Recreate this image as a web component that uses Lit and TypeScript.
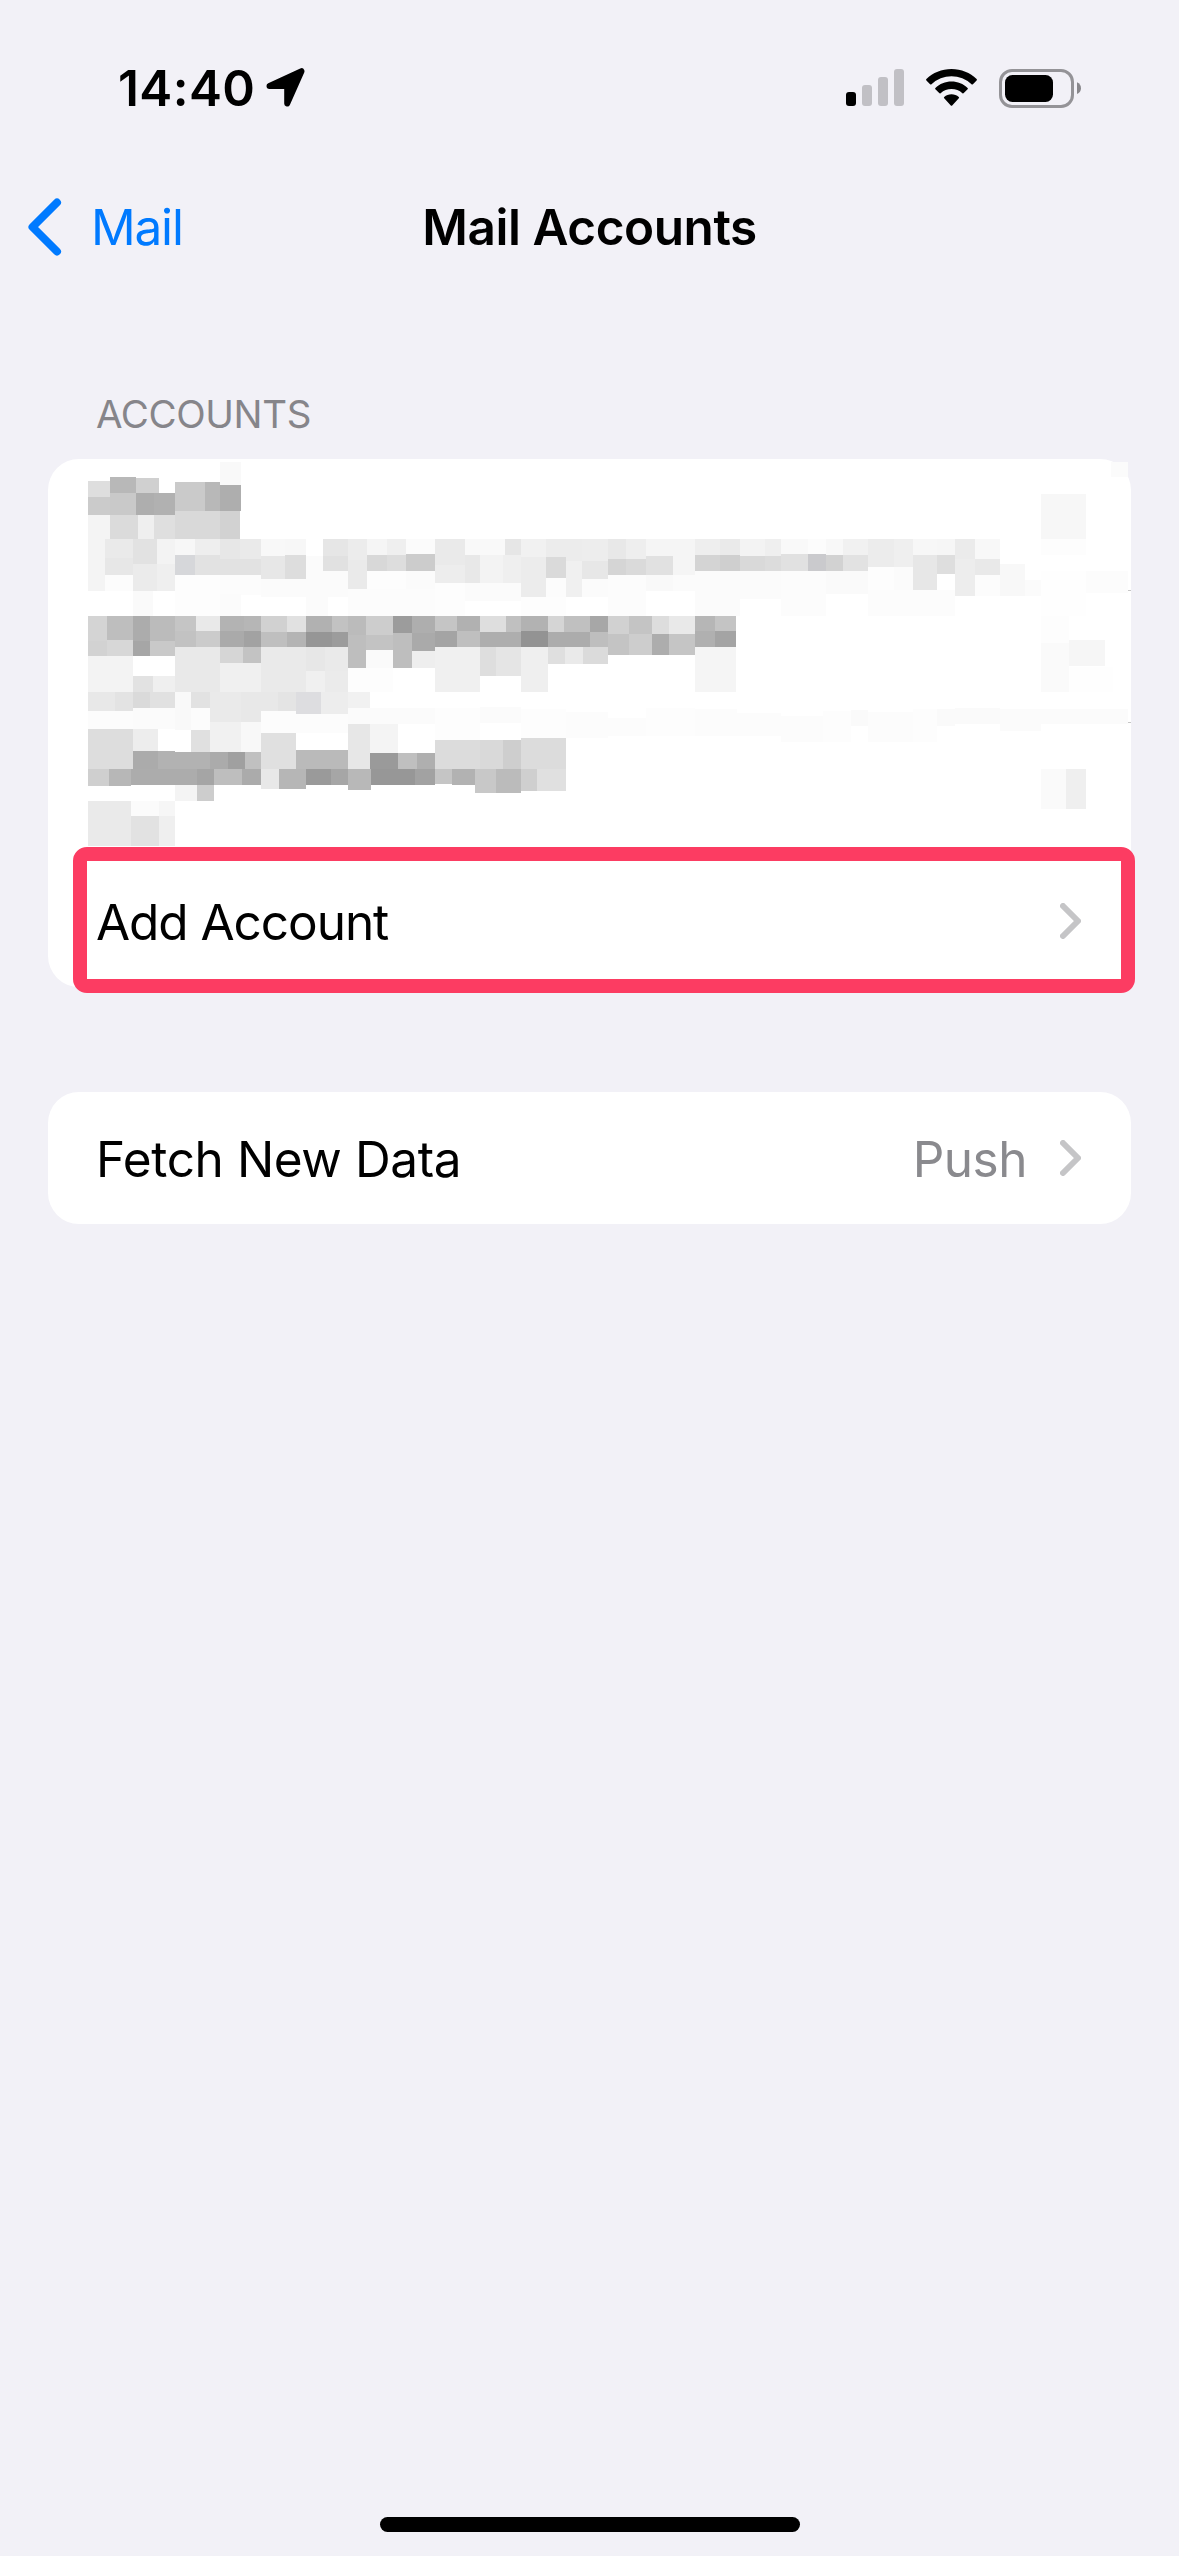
import { LitElement, html, svg, css } from "lit";
import { customElement, property } from "lit/decorators.js";

const sheet = css`
  :host {
    display: block;
    font-family: Inter, "Liberation Sans", sans-serif;
    font-size: 49.5px;
    line-height: 60px;
    color: #000;
  }
  svg {
    display: block;
    flex: none;
  }
`;

// Redaction mosaic over the account rows: x1 y1 x2 y2 shade.
// A two-digit shade is a grey, a six-digit one a full colour.
const MOSAIC = `
88 481 110 497 de|110 477 136 493 b8|136 478 159 493 d0|88 497 110 515 cb|110 493 136 515 c9
136 493 154 515 ae|154 493 175 515 b1|175 482 205 511 ca|205 482 220 511 b8|220 462 241 485 f9
220 485 241 511 ae|88 515 110 539 f4|110 515 138 539 db|138 515 154 539 ef|154 515 175 539 df
175 511 220 539 d9|220 511 240 539 d2|88 539 105 591 f4|105 539 133 558 ea|105 558 133 575 e7
105 575 133 591 fc|133 539 157 564 e2|133 564 157 591 eb|157 539 175 564 f3|157 564 175 591 ef
175 539 195 555 f7|175 555 195 575 d6d7da|195 539 220 555 ee|195 555 220 575 e2|220 539 240 559 e7
240 539 261 559 ea|220 559 261 575 e2|261 539 285 556 f8|285 539 306 556 f7|261 556 285 579 e7
285 555 306 579 dd|175 575 220 616 fd|220 575 261 595 fc|261 579 306 597 fb|306 556 323 597 fb
323 571 348 597 fb|323 539 348 556 e6|323 556 348 571 e1|348 539 367 560 ec|348 560 367 589 ea
367 539 387 555 f5|387 539 406 555 ef|367 555 387 571 d8|387 555 406 571 dd|367 571 406 589 fd
406 571 435 589 fb|133 591 153 616 fa|220 594 241 616 fb|306 597 328 616 fb|348 589 435 616 fc
406 539 435 554 fb|406 554 435 571 cc|435 539 465 565 ea|435 565 465 583 ed|465 539 505 555 f9
505 539 521 555 e6|465 555 480 583 e8|480 555 503 583 f3|503 555 521 583 ef|521 539 546 557 f1
521 557 546 597 ec|546 539 566 557 ec|546 557 566 578 da|546 578 566 597 fc|566 539 582 561 ec
582 539 608 561 ed|566 561 582 597 f0|582 561 608 579 e7|582 579 608 597 fb|608 539 626 559 e8
626 539 646 559 ee|608 559 626 575 d5|626 559 646 575 da|646 539 695 575 f5|646 556 673 575 e1
608 575 646 616 fc|646 575 673 591 f9|673 575 695 591 fb|695 539 720 555 ee|720 539 740 555 ea
695 555 720 571 d4|720 555 740 571 cf|740 539 765 556 f3|765 539 781 556 ef|740 556 765 571 d9
765 556 781 571 dc|695 571 740 616 fb|740 571 781 599 fb|435 583 465 616 fd|465 583 521 601 fb
521 597 566 616 fd|781 539 808 554 f9|808 539 826 554 fc|826 539 843 555 f8|843 539 868 555 f1
868 539 894 567 ec|894 539 913 567 ef|781 554 808 571 e1|808 554 826 571 cacacd|826 555 843 571 d2
843 555 868 571 e2|913 539 937 555 f7|937 539 955 555 f6|955 539 975 559 eb|975 539 1000 559 f8
913 555 937 590 e7|937 555 955 574 de|955 559 975 596 ed|975 559 1000 575 e9|975 575 1000 596 fc
1000 564 1025 596 f8|1025 580 1041 596 fb|868 567 894 590 fd|894 567 913 590 fb|826 571 868 594 fa
781 571 826 616 fc|868 590 955 616 fc|1111 462 1128 477 fb|1041 494 1086 539 f7|1041 539 1086 555 fd
1041 571 1086 616 fe|1086 571 1128 593 fc|1128 590 1131 591 c6|1128 722 1131 723 c6
1041 616 1069 643 fd|1041 643 1069 692 fa|1069 640 1105 666 f6|1069 667 1113 692 fe
1041 769 1066 809 fa|1066 769 1086 809 ef|1041 709 1128 724 fb|1000 709 1041 731 fb
955 708 1000 724 fa|937 709 955 726 fa|913 709 937 742 fd|868 712 913 742 fc|851 710 868 726 fa
823 711 851 742 fd|781 716 823 742 fc|88 616 107 641 d4|107 616 133 640 be|88 641 107 656 d2
107 640 133 656 d7|133 616 150 641 ac|150 616 175 641 bb|133 641 150 656 a6|150 641 175 656 c9
175 616 196 631 c5|196 616 220 631 e9|175 631 196 647 c2|196 631 220 647 cb|220 616 244 631 b3
244 616 261 631 b6|220 631 244 647 aa|244 631 261 647 a2|261 616 287 632 d1|287 616 306 632 e1
261 632 287 647 bf|287 632 306 647 b4|306 616 332 632 b1|332 616 348 632 c2|306 632 332 647 96
332 632 348 647 9c|348 616 366 635 bb|366 616 393 635 cd|348 635 366 668 be|366 635 393 650 c3
366 650 393 668 fa|393 616 412 633 9c|412 616 435 633 ae|393 633 412 668 be|412 633 435 651 aa
412 651 435 668 ee|88 656 133 692 f3|133 676 153 692 e2|153 676 175 692 ef|175 647 220 692 e9
220 647 243 663 d6|243 647 261 663 c3|220 663 261 692 f0|261 647 306 692 ea|306 647 325 671 e7
325 647 348 671 ea|306 671 325 692 f0|325 671 348 692 eb|348 668 393 692 fd|88 692 115 711 e8
115 692 133 711 e3|133 692 150 708 da|150 692 175 708 e1|175 692 191 730 f9|191 692 210 708 e2
191 708 210 730 fc|210 692 241 722 ea|241 692 261 722 e8|261 692 278 711 e8|278 692 296 711 e4
296 692 321 714 dddde0|321 692 348 714 ed|348 692 370 708 f1|348 708 435 724 fb|88 711 133 729 fc
133 708 175 729 fb|261 711 296 733 fc|296 714 348 733 fc|88 729 133 769 dd|133 729 158 751 ed
191 730 210 752 e0|210 722 241 752 f1|241 722 261 752 f8|261 733 296 769 e0|133 751 158 769 ab
158 751 175 769 b2|175 752 210 769 b2|210 752 228 769 ab|228 752 245 769 a0|245 752 261 769 c0
296 750 348 769 ba|348 724 370 769 e7|370 724 398 753 f4|370 753 398 769 9a|398 753 417 769 bf
417 753 435 769 af|88 769 109 786 cf|109 769 131 786 b7|131 769 197 785 ac|197 769 214 785 a5
214 769 242 785 be|242 769 261 785 ab|261 769 279 789 e8|279 769 306 789 b6|306 769 331 785 9a
331 769 348 785 a6|348 769 371 790 b8|371 769 415 785 97|415 769 435 785 a2|175 785 197 801 f4
197 785 214 801 cd|88 801 131 846 ea|131 801 159 816 fb|159 801 175 816 f6|131 816 159 846 e2
159 816 175 846 ef|435 616 457 631 c5|457 616 480 631 b1|435 631 457 647 a4|457 631 480 647 bf
480 616 506 632 de|506 616 521 632 c0|480 632 521 647 ae|521 616 548 631 b2|521 631 548 647 93
548 616 564 632 d5|564 616 590 632 c0|590 616 608 632 a7|548 632 590 647 ac|590 632 608 647 be
608 616 629 634 d1|629 616 652 634 c4|652 616 669 634 dd|669 616 695 634 e9|608 634 629 655 c4
629 634 652 655 cd|652 634 669 655 ad|669 634 695 655 c5|695 616 715 631 b6|715 616 736 631 c4
695 631 715 647 b0|715 631 736 647 a4|435 647 480 692 f0|480 647 496 676 de|496 647 521 676 e5
521 647 548 692 ef|548 647 565 664 df|565 647 583 664 ea|583 647 608 664 db|695 647 736 692 f5
435 708 480 740 fd|480 707 521 723 fb|521 709 566 738 fd|566 712 608 738 fc|608 718 646 736 fc
646 708 695 736 fd|695 709 737 736 fc|737 713 781 736 fc|435 740 480 769 dc|480 740 503 769 d9
503 740 521 769 ce|521 738 566 769 dc|435 769 452 784 c5|452 769 475 785 b2|475 769 496 793 c8
496 769 521 793 bb|521 769 537 791 cf|537 769 566 791 e0`
  .trim()
  .split(/[|\n]/)
  .map((block) => {
    const [x1, y1, x2, y2, shade] = block.split(" ");
    return {
      x: +x1,
      y: +y1,
      w: +x2 - +x1,
      h: +y2 - +y1,
      fill: "#" + (shade.length === 2 ? shade.repeat(3) : shade),
    };
  });

@customElement("status-bar")
class StatusBar extends LitElement {
  static styles = [
    sheet,
    css`
      .bar {
        display: flex;
        align-items: center;
        height: 176px;
        padding: 0 98px 0 118px;
        box-sizing: border-box;
      }
      .time {
        font-weight: 600;
        letter-spacing: 0.4px;
        margin-right: 10.5px;
      }
      .gap {
        flex: 1;
      }
      .signal {
        margin-right: 22px;
      }
      .wifi {
        margin-right: 22px;
      }
    `,
  ];
  render() {
    return html`<div class="bar">
      <span class="time">14:40</span>
      <svg width="40" height="40" viewBox="0 0 40 40">
        <path
          d="M3.500 18 35.500 3.200 21.200 35.500V18Z"
          stroke="#000"
          stroke-width="6"
          stroke-linejoin="round"
        />
      </svg>
      <span class="gap"></span>
      <svg class="signal" width="58" height="38" viewBox="0 0 58 38">
        <rect y="23" width="10" height="14" rx="3" />
        <g fill="#c1c0c5">
          <rect x="16" y="16" width="10" height="21" rx="3" />
          <rect x="32" y="8" width="10" height="29" rx="3" />
          <rect x="48" width="10" height="37" rx="3" />
        </g>
      </svg>
      <svg class="wifi" width="51" height="38" viewBox="0 0 51 38">
        <path
          d="M25.500 0C35.300 0 44.200 3.800 50.600 10Q51.200 10.700 50.600 11.400L46.900 15.200Q46.200 15.900 45.500 15.200A29 29 0 0 0 5.500 15.200Q4.800 15.900 4.100 15.200L.4 11.400Q-.2 10.700 .4 10C6.800 3.800 15.700 0 25.500 0Z"
        />
        <path
          d="M25.500 12.600C31.700 12.600 37.300 15 41.600 18.900Q42.300 19.600 41.600 20.300L37.800 24.100Q37.100 24.800 36.400 24.200A16.500 16.500 0 0 0 14.600 24.200Q13.900 24.800 13.200 24.100L9.400 20.300Q8.700 19.600 9.400 18.900C13.700 15 19.300 12.600 25.500 12.600Z"
        />
        <path
          d="M25.500 25.200C28.300 25.200 30.800 26.200 32.800 27.900Q33.500 28.600 32.800 29.300L26.200 36.400Q25.500 37.100 24.800 36.400L18.200 29.300Q17.500 28.600 18.200 27.900C20.200 26.200 22.700 25.200 25.500 25.200Z"
        />
      </svg>
      <svg width="82" height="39" viewBox="0 0 82 39">
        <rect x="1.500" y="1.500" width="72" height="36" rx="11.500" fill="none" stroke="#949397" stroke-width="3" />
        <rect x="6" y="6" width="48" height="27" rx="7.500" />
        <path d="M78 13.300C80.600 14.400 82 16.700 82 19.200S80.600 24 78 25.100Z" fill="#88878b" />
      </svg>
    </div>`;
  }
}

@customElement("nav-bar")
class NavBar extends LitElement {
  static styles = [
    sheet,
    css`
      .bar {
        display: grid;
        grid-template-columns: 1fr auto 1fr;
        align-items: center;
        height: 102px;
        padding: 0 28px;
      }
      .back {
        display: flex;
        align-items: center;
        gap: 29px;
        color: #007aff;
      }
      .label {
        letter-spacing: -1.2px;
      }
      .title {
        font-weight: 600;
        letter-spacing: -0.45px;
      }
    `,
  ];
  render() {
    return html`<div class="bar">
      <span class="back">
        <svg width="34" height="58" viewBox="0 0 34 58">
          <path
            d="M29 4.500 4.500 29 29 53.500"
            fill="none"
            stroke="#007aff"
            stroke-width="8"
            stroke-linecap="round"
            stroke-linejoin="round"
          />
        </svg>
        <span class="label">Mail</span>
      </span>
      <span class="title">Mail Accounts</span>
    </div>`;
  }
}

@customElement("list-row")
class ListRow extends LitElement {
  @property() label = "";
  @property() value = "";
  @property({ type: Boolean, reflect: true }) highlighted = false;
  static styles = [
    sheet,
    css`
      .row {
        position: relative;
        display: flex;
        align-items: center;
        height: 132px;
        padding: 0 50px 0 48px;
      }
      .label {
        flex: 1;
        padding-top: 2px;
        letter-spacing: -0.4px;
      }
      :host([highlighted]) .label {
        letter-spacing: -1.05px;
      }
      .value {
        color: #8a8a8e;
        padding-top: 2px;
        letter-spacing: -0.5px;
        margin-right: 33px;
      }
      .ring {
        position: absolute;
        left: 25px;
        right: -4px;
        top: -8px;
        bottom: -6px;
        border: 14px solid #fc3c62;
        border-radius: 14px;
      }
    `,
  ];
  render() {
    return html`<div class="row">
      <span class="label">${this.label}</span>
      <span class="value">${this.value}</span>
      <svg width="21" height="36" viewBox="0 0 21 36">
        <path
          d="M3 3 18 18 3 33"
          fill="none"
          stroke="#c5c5c7"
          stroke-width="6"
          stroke-linecap="round"
          stroke-linejoin="round"
        />
      </svg>
      ${this.highlighted ? html`<div class="ring"></div>` : null}
    </div>`;
  }
}

@customElement("app-root")
class AppRoot extends LitElement {
  static styles = [
    sheet,
    css`
      .screen {
        display: flex;
        flex-direction: column;
        height: 2556px;
        background: #f2f1f7;
      }
      .content {
        flex: 1;
        padding: 106px 48px 0;
      }
      .heading {
        padding-left: 48px;
        font-size: 38.5px;
        color: #86858a;
        letter-spacing: -0.4px;
        margin-bottom: 15px;
      }
      .card {
        background: #fff;
        border-radius: 31px;
      }
      .card + .card {
        margin-top: 105px;
      }
      .mosaic {
        overflow: visible;
      }
      .home {
        align-self: center;
        width: 420px;
        height: 15px;
        border-radius: 8px;
        background: #000;
        margin-bottom: 24px;
      }
    `,
  ];
  render() {
    return html`<div class="screen">
      <status-bar></status-bar>
      <nav-bar></nav-bar>
      <div class="content">
        <div class="heading">ACCOUNTS</div>
        <div class="card">
          <svg
            class="mosaic"
            width="1083"
            height="396"
            viewBox="48 459 1083 396"
            shape-rendering="crispEdges"
          >
            ${MOSAIC.map(
              (b) => svg`<rect x=${b.x} y=${b.y} width=${b.w} height=${b.h} fill=${b.fill} />`
            )}
          </svg>
          <list-row label="Add Account" highlighted></list-row>
        </div>
        <div class="card">
          <list-row label="Fetch New Data" value="Push"></list-row>
        </div>
      </div>
      <div class="home"></div>
    </div>`;
  }
}
